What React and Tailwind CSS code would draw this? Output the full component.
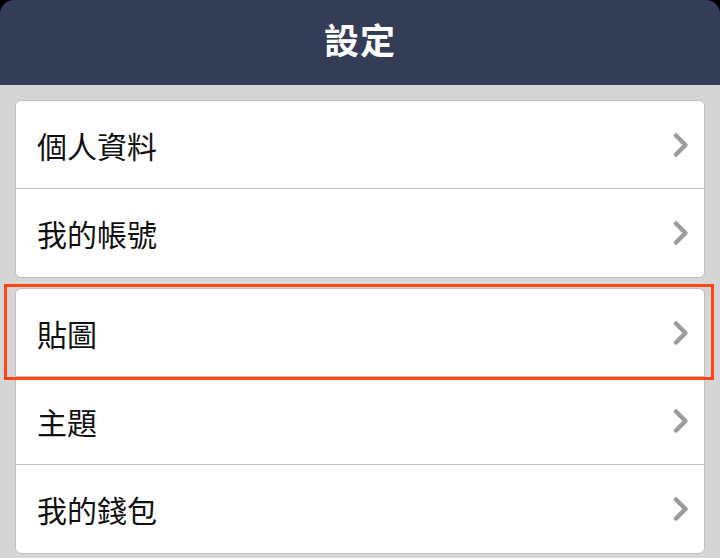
import React from 'react';

const font = { fontFamily: '"Noto Sans CJK TC", "Noto Sans", sans-serif' };

const Chevron = () => (
  <svg width="18" height="26" viewBox="0 0 18 26" className="shrink-0">
    <polyline
      points="4,3.5 13.5,13 4,22.5"
      fill="none"
      stroke="#9c9c9c"
      strokeWidth="4.5"
      strokeLinecap="round"
      strokeLinejoin="round"
    />
  </svg>
);

const Row = ({ label, last, highlighted }) => (
  <div
    className={`relative h-[88px] flex items-center justify-between pl-[21px] pr-[14px] ${
      last ? '' : 'border-b border-[#c2c2c2]'
    }`}
  >
    <span className="text-[30px] leading-none text-[#111]">{label}</span>
    <Chevron />
    {highlighted && (
      <div className="absolute -left-[12px] -right-[10px] -top-[5px] -bottom-[4px] border-[3px] border-[#ff4614] pointer-events-none" />
    )}
  </div>
);

const Card = ({ items, highlightFirst }) => (
  <div className="bg-white border border-[#bfbfbf] rounded-[6px]">
    {items.map((label, i) => (
      <Row
        key={label}
        label={label}
        last={i === items.length - 1}
        highlighted={highlightFirst && i === 0}
      />
    ))}
  </div>
);

export default function App() {
  return (
    <div className="w-[720px] h-[558px] bg-black overflow-hidden flex flex-col" style={font}>
      <div className="h-[85px] shrink-0 bg-[#343d56] rounded-t-[14px] flex items-center justify-center pb-[8px]">
        <h1 className="text-[35px] font-bold text-white leading-none tracking-[1px]">設定</h1>
      </div>
      <div className="flex-1 bg-[#d5d5d5] px-[15px] pt-[15px] flex flex-col gap-[10px]">
        <Card items={['個人資料', '我的帳號']} />
        <Card items={['貼圖', '主題', '我的錢包']} highlightFirst />
      </div>
    </div>
  );
}
